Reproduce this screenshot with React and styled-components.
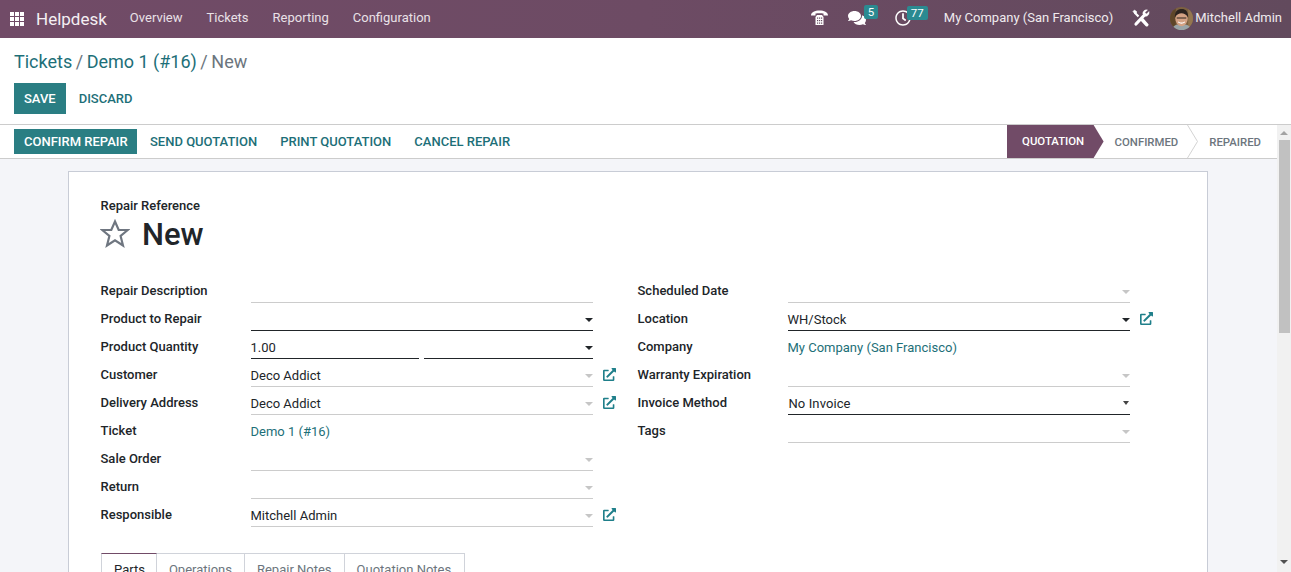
import React from 'react';
import styled, { createGlobalStyle } from 'styled-components';
import { FaComments, FaRegClock, FaExternalLinkAlt } from 'react-icons/fa';

const Global = createGlobalStyle`
  html, body { margin: 0; padding: 0; height: 100%; overflow: hidden; }
  body { font-family: Roboto, "Noto Sans", sans-serif; font-size: 13px; color: #212529; background: #fff; }
  #root { height: 100%; }
`;

const teal = '#1d6f78';
const line = '#cccccc';

const Page = styled.div`
  height: 100vh;
  display: flex;
  flex-direction: column;
  overflow: hidden;
`;

const Navbar = styled.header`
  flex: 0 0 38px;
  height: 38px;
  display: flex;
  align-items: center;
  justify-content: space-between;
  color: #fff;
  background: linear-gradient(90deg, #714b67 0%, #6d4b64 50%, #624a5d 100%);
`;

const NavLeft = styled.nav`
  display: flex;
  align-items: center;
  padding-bottom: 3px;
`;

const Grid3 = styled.svg`
  width: 14px;
  height: 14px;
  margin: 3px 0 0 10px;
  fill: #fff;
`;

const Brand = styled.span`
  font-size: 17px;
  margin: 2px 11px 0 12px;
  color: #f4eff3;
`;

const NavLink = styled.a`
  padding: 0 12px;
  color: #e9e1e7;
`;

const Tray = styled.div`
  display: flex;
  align-items: center;
  padding: 0 9px 2px 0;
  color: #efeaee;
`;

const TrayIcon = styled.span`
  position: relative;
  display: flex;
  margin-left: ${p => p.$gap}px;
  color: #fff;
`;

const Badge = styled.span`
  position: absolute;
  top: -4px;
  left: ${p => p.$left}px;
  height: 14px;
  padding: 0 4px;
  border-radius: 2px;
  background: #2b8a91;
  color: #fff;
  font-size: 11.5px;
  line-height: 14px;
`;

const TrayText = styled.span`
  margin-left: ${p => p.$gap}px;
  padding-bottom: 2px;
`;

const Avatar = styled.svg`
  width: 23px;
  height: 23px;
  margin-left: 20px;
  border-radius: 50%;
`;

const ControlPanel = styled.section`
  flex: 0 0 87px;
  box-sizing: border-box;
  padding: 13px 14px 0;
  border-bottom: 1px solid ${line};
`;

const Breadcrumb = styled.div`
  display: flex;
  height: 21px;
  margin-bottom: 11px;
  font-size: 18px;
  line-height: 21px;
  color: #6c757d;
`;

const Crumb = styled.a`
  color: ${teal};
`;

const Sep = styled.span`
  margin: 0 3.5px;
`;

const Buttons = styled.div`
  display: flex;
  align-items: center;
  gap: 3px;
`;

const Button = styled.button`
  height: ${p => p.$h}px;
  ${p => p.$w && `width: ${p.$w}px;`}
  padding: 0 10px;
  border: 0;
  border-radius: 0;
  white-space: nowrap;
  background: ${p => (p.$primary ? '#2a7e83' : 'transparent')};
  color: ${p => (p.$primary ? '#fff' : teal)};
  font: 500 13px Roboto, sans-serif;
  text-transform: uppercase;
`;

const Body = styled.div`
  flex: 1;
  min-height: 0;
  display: flex;
`;

const Content = styled.main`
  flex: 1;
  min-width: 0;
  overflow: hidden;
  background: #f4f5f9;
`;

const StatusBar = styled.div`
  height: 33px;
  border-bottom: 1px solid ${line};
  background: #fff;
  display: flex;
  align-items: center;
  justify-content: space-between;
  padding-left: 14px;
`;

const Steps = styled.div`
  display: flex;
  align-items: center;
  height: 33px;
  padding-right: 16px;
  font-weight: 500;
  font-size: 11.375px;
  color: #6c757d;
  text-transform: uppercase;
`;

const ActiveStep = styled.span`
  width: 97px;
  height: 33px;
  box-sizing: border-box;
  padding-left: 15.5px;
  line-height: 33px;
  color: #fff;
  background: #714b67;
  clip-path: polygon(0 0, 87px 0, 97px 50%, 87px 100%, 0 100%);
`;

const Step = styled.span`
  padding: 0 9px 0 11px;
  &:last-child { padding-right: 0; }
`;

const Chevron = styled.svg`
  width: 11px;
  height: 33px;
  fill: none;
  stroke: #d3d3d3;
`;

const Sheet = styled.form`
  width: 1140px;
  box-sizing: border-box;
  margin: 12px 0 0 68px;
  padding: 25px 31px 0 31.5px;
  border: 1px solid #c8ccd6;
  background: #fff;
`;

const RefLabel = styled.div`
  font-weight: 500;
  line-height: 18px;
`;

const Title = styled.h1`
  display: flex;
  align-items: center;
  margin: 1px 0 21px -0.5px;
  height: 38px;
  font-size: 31px;
  font-weight: 500;
  line-height: 38px;
  color: #212529;
`;

const Star = styled.svg`
  width: 30px;
  height: 29px;
  margin: -4px 12px 0 0;
  fill: none;
  stroke: #6f7680;
  stroke-width: 2.2;
`;

const Columns = styled.div`
  display: flex;
  gap: 21px;
`;

const Group = styled.div`
  width: 516px;
`;

const Row = styled.div`
  display: flex;
  height: 28px;
`;

const Label = styled.label`
  flex: 0 0 150px;
  font-weight: 500;
  line-height: 32px;
`;

const Inputs = styled.div`
  flex: 0 0 342px;
  display: flex;
  gap: 5px;
`;

const Input = styled.div`
  flex: 1;
  min-width: 0;
  height: 28px;
  box-sizing: border-box;
  border-bottom: 1px solid ${p => (p.$dark ? '#212529' : line)};
  display: flex;
  align-items: center;
  justify-content: space-between;
  padding-top: 5px;
  padding-left: ${p => (p.$select ? 1 : 0)}px;
  letter-spacing: ${p => (p.$select ? '0.1px' : '0')};
`;

const PlainValue = styled.a`
  line-height: 34px;
  color: ${teal};
`;

const Caret = styled.i`
  width: 0;
  height: 0;
  border-left: ${p => (p.$small ? 3.5 : 4)}px solid transparent;
  border-right: ${p => (p.$small ? 3.5 : 4)}px solid transparent;
  border-top: 4px solid ${p => (p.$small ? '#444' : p.$dark ? '#212529' : '#c6c6c6')};
  margin: ${p => (p.$small ? '0 1px 0 auto' : '1px 0 0 auto')};
`;

const LinkIcon = styled(FaExternalLinkAlt)`
  width: 13px;
  height: 13px;
  margin: 9px 0 0 10px;
  color: #1f7f8a;
`;

const Tabs = styled.ul`
  display: flex;
  list-style: none;
  margin: 26px 0 0 0.5px;
  padding: 0;
`;

const Tab = styled.li`
  padding: 0 ${p => (p.$first ? 11 : 12)}px 0 12px;
  height: 40px;
  line-height: 31px;
  border: 1px solid #d0d3da;
  border-left-width: ${p => (p.$first ? 1 : 0)}px;
  border-top-color: ${p => (p.$active ? '#714b67' : '#d0d3da')};
  color: ${p => (p.$active ? '#212529' : '#6c757d')};
  &:last-child { padding-right: 13px; }
`;

const ScrollTrack = styled.div`
  flex: 0 0 14px;
  background: #f1f1f1;
  display: flex;
  flex-direction: column;
  align-items: center;
`;

const ScrollThumb = styled.div`
  width: 11px;
  height: 193px;
  margin: 5px 0 0 1px;
  background: #c1c1c1;
`;

const ScrollArrow = styled.i`
  width: 0;
  height: 0;
  margin-top: ${p => p.$top}px;
  border-left: 4px solid transparent;
  border-right: 4px solid transparent;
  ${p => (p.$up ? 'border-bottom: 4px solid #a3a3a3;' : 'border-top: 4px solid #505050;')}
`;

const left = [
  { label: 'Repair Description' },
  { label: 'Product to Repair', dark: true, caret: true },
  { label: 'Product Quantity', qty: '1.00' },
  { label: 'Customer', value: 'Deco Addict', caret: true, ext: true },
  { label: 'Delivery Address', value: 'Deco Addict', caret: true, ext: true },
  { label: 'Ticket', link: 'Demo 1 (#16)' },
  { label: 'Sale Order', caret: true },
  { label: 'Return', caret: true },
  { label: 'Responsible', value: 'Mitchell Admin', caret: true, ext: true },
];

const right = [
  { label: 'Scheduled Date', caret: true },
  { label: 'Location', value: 'WH/Stock', dark: true, caret: true, ext: true },
  { label: 'Company', link: 'My Company (San Francisco)' },
  { label: 'Warranty Expiration', caret: true },
  { label: 'Invoice Method', value: 'No Invoice', dark: true, caret: true, select: true },
  { label: 'Tags', caret: true },
];

const Field = ({ label, value, link, dark, caret, ext, qty, select }) => (
  <Row>
    <Label>{label}</Label>
    <Inputs>
      {link && <PlainValue>{link}</PlainValue>}
      {qty && (
        <>
          <Input $dark>{qty}</Input>
          <Input $dark><Caret $dark /></Input>
        </>
      )}
      {!link && !qty && (
        <Input $dark={dark} $select={select}>
          {value}
          {caret && <Caret $dark={dark} $small={select} />}
        </Input>
      )}
    </Inputs>
    {ext && <LinkIcon />}
  </Row>
);

export default function App() {
  return (
    <Page>
      <Global />
      <Navbar>
        <NavLeft>
          <Grid3 viewBox="0 0 14 14">
            {[0, 5, 10].map(y => [0, 5, 10].map(x => <rect key={`${x}-${y}`} x={x} y={y} width="4" height="4" />))}
          </Grid3>
          <Brand>Helpdesk</Brand>
          <NavLink>Overview</NavLink>
          <NavLink>Tickets</NavLink>
          <NavLink>Reporting</NavLink>
          <NavLink>Configuration</NavLink>
        </NavLeft>
        <Tray>
          <TrayIcon $gap={0}>
            <svg width="17" height="16" viewBox="0 0 17 16" fill="#fff">
              <path d="M0 5.500C0 2 4 .5 8.500 .5S17 2 17 5.500H12.500V3.500C11 3 6 3 4.500 3.500V5.500Z" />
              <path d="M4.500 7L6 5h5l1.500 2v8h-8Z" />
              <g fill="#654a5f">
                <rect x="6" y="7.500" width="1.200" height="1.200" /><rect x="8" y="7.500" width="1.200" height="1.200" /><rect x="10" y="7.500" width="1.200" height="1.200" />
                <rect x="6" y="10" width="1.200" height="1.200" /><rect x="8" y="10" width="1.200" height="1.200" /><rect x="10" y="10" width="1.200" height="1.200" />
                <rect x="6" y="12.500" width="1.200" height="1.200" /><rect x="8" y="12.500" width="1.200" height="1.200" /><rect x="10" y="12.500" width="1.200" height="1.200" />
              </g>
            </svg>
          </TrayIcon>
          <TrayIcon $gap={20}>
            <FaComments size={18} />
            <Badge $left={16}>5</Badge>
          </TrayIcon>
          <TrayIcon $gap={29}>
            <FaRegClock size={16} />
            <Badge $left={12}>77</Badge>
          </TrayIcon>
          <TrayText $gap={33}>My Company (San Francisco)</TrayText>
          <TrayIcon $gap={19}>
            <svg width="18" height="18" viewBox="0 0 18 18" fill="#fff" stroke="#fff">
              <path d="M4 15L12 6.500" strokeWidth="3.200" strokeLinecap="round" fill="none" />
              <path d="M10.800 4.800C10.500 2.300 12.800 .3 15.500 1L12.900 3.400L14.500 5.100L17 2.500C17.600 5.400 15.500 7.700 13 7.300Z" strokeWidth=".4" />
              <path d="M6.500 7.500L2.800 3.800" strokeWidth="2.200" fill="none" />
              <path d="M1 2.500L2.500 1L5 3L3 5Z" strokeWidth=".6" />
              <path d="M10 10.500L14.800 15.800" strokeWidth="3.400" strokeLinecap="round" fill="none" />
            </svg>
          </TrayIcon>
          <Avatar viewBox="0 0 24 24">
            <rect width="24" height="24" fill="#7c6040" />
            <rect x="0" y="0" width="6" height="24" fill="#5e4629" />
            <rect x="19" y="0" width="5" height="24" fill="#94764f" />
            <path d="M2 24c1-5 5-6 10-6s9 1 10 6Z" fill="#9aa5a8" />
            <ellipse cx="12" cy="12" rx="6.500" ry="8" fill="#d3a284" />
            <path d="M5 11C5 3 9 2 12.500 2S19 4 19 11c-2-3.500-4.500-4.500-7-4.500S7 7.500 5 11Z" fill="#2c241f" />
            <path d="M7 11.500h4M13 11.500h4M11 11.500h2" stroke="#2c241f" strokeWidth="1.100" />
            <path d="M8.500 15.500c2.300 1.800 4.700 1.800 7 0" stroke="#fff" strokeWidth="1.200" fill="none" />
          </Avatar>
          <TrayText $gap={2}>Mitchell Admin</TrayText>
        </Tray>
      </Navbar>

      <ControlPanel>
        <Breadcrumb>
          <Crumb>Tickets</Crumb><Sep>/</Sep><Crumb>Demo 1 (#16)</Crumb><Sep>/</Sep>New
        </Breadcrumb>
        <Buttons>
          <Button $primary $h={31}>Save</Button>
          <Button $h={31}>Discard</Button>
        </Buttons>
      </ControlPanel>

      <Body>
        <Content>
          <StatusBar>
            <Buttons>
              <Button $primary $h={25} $w={123}>Confirm Repair</Button>
              <Button $h={25}>Send Quotation</Button>
              <Button $h={25}>Print Quotation</Button>
              <Button $h={25}>Cancel Repair</Button>
            </Buttons>
            <Steps>
              <ActiveStep>Quotation</ActiveStep>
              <Step>Confirmed</Step>
              <Chevron viewBox="0 0 11 33"><path d="M.5 0L10.500 16.500L.5 33" /></Chevron>
              <Step>Repaired</Step>
            </Steps>
          </StatusBar>
          <Sheet>
            <RefLabel>Repair Reference</RefLabel>
            <Title>
              <Star viewBox="0 0 30 29"><path d="M15 2.500L18.700 11H27.800L20.600 17L23 26.500L15 21.300L7 26.500L9.400 17L2.200 11H11.300Z" /></Star>
              New
            </Title>
            <Columns>
              <Group>{left.map(f => <Field key={f.label} {...f} />)}</Group>
              <Group>{right.map(f => <Field key={f.label} {...f} />)}</Group>
            </Columns>
            <Tabs>
              <Tab $first $active>Parts</Tab>
              <Tab>Operations</Tab>
              <Tab>Repair Notes</Tab>
              <Tab>Quotation Notes</Tab>
            </Tabs>
          </Sheet>
        </Content>
        <ScrollTrack>
          <ScrollArrow $up $top={6} />
          <ScrollThumb />
          <ScrollArrow $top={227} />
        </ScrollTrack>
      </Body>
    </Page>
  );
}
